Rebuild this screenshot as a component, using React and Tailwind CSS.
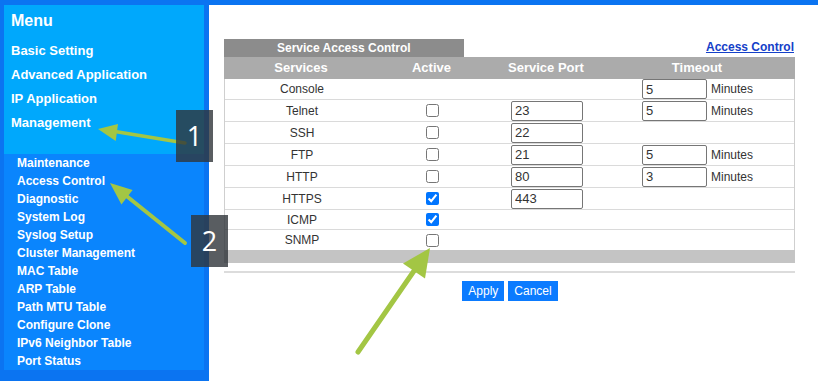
import React from 'react'

const topItems = ['Basic Setting', 'Advanced Application', 'IP Application', 'Management']
const subItems = [
  'Maintenance', 'Access Control', 'Diagnostic', 'System Log', 'Syslog Setup', 'Cluster Management',
  'MAC Table', 'ARP Table', 'Path MTU Table', 'Configure Clone', 'IPv6 Neighbor Table', 'Port Status',
]

const rows = [
  { name: 'Console', h: 'h-[21px]', box: false, port: null, timeout: '5' },
  { name: 'Telnet', h: 'h-[22px]', box: true, checked: false, port: '23', timeout: '5' },
  { name: 'SSH', h: 'h-[22px]', box: true, checked: false, port: '22', timeout: null },
  { name: 'FTP', h: 'h-[22px]', box: true, checked: false, port: '21', timeout: '5' },
  { name: 'HTTP', h: 'h-[22px]', box: true, checked: false, port: '80', timeout: '3' },
  { name: 'HTTPS', h: 'h-[22px]', box: true, checked: true, port: '443', timeout: null },
  { name: 'ICMP', h: 'h-[20px]', box: true, checked: true, port: null, timeout: null },
  { name: 'SNMP', h: 'h-[20px] border-b-0', box: true, checked: false, port: null, timeout: null },
]

function TextBox({ value, w }) {
  return (
    <input
      type="text"
      defaultValue={value}
      className={`${w} h-[20px] border border-[#767676] rounded-[2px] px-[3px] text-[13px] text-[#333] bg-white outline-none`}
    />
  )
}

function ServiceRow({ row }) {
  return (
    <div className={`grid grid-cols-[154px_107px_122px_186px] items-center border-b border-[#dadada] ${row.h}`}>
      <div className="text-center">{row.name}</div>
      <div className="flex justify-center">
        {row.box && (
          <input type="checkbox" defaultChecked={row.checked} className="w-[13px] h-[13px] accent-[#0075ff]" />
        )}
      </div>
      <div className="flex justify-center">{row.port && <TextBox value={row.port} w="w-[72px]" />}</div>
      <div className="flex items-center gap-[4px] pl-[34px]">
        {row.timeout && (
          <>
            <TextBox value={row.timeout} w="w-[65px]" />
            <span>Minutes</span>
          </>
        )}
      </div>
    </div>
  )
}

export default function App() {
  return (
    <div className="relative w-[818px] h-[381px] overflow-hidden bg-white font-['Liberation_Sans',Arial,sans-serif]">
      <div className="h-[5px] bg-[#0b74f1]" />
      <div className="flex">
        {/* Sidebar */}
        <div className="w-[209px] h-[376px] bg-[#0b74f1] pl-[4px] pr-[5px] flex flex-col">
          <div className="bg-[#00a8fc] h-[149px] pl-[7px] pt-[5px] text-white font-bold">
            <div className="text-[16px] leading-[22px]">Menu</div>
            <div className="mt-[7px] text-[13px] leading-[24px]">
              {topItems.map((t) => <div key={t}>{t}</div>)}
            </div>
          </div>
          <div className="bg-[#0a85fd] h-[216px] pl-[13px] text-white font-bold text-[12px] leading-[18px]">
            {subItems.map((t) => <div key={t}>{t}</div>)}
          </div>
        </div>

        {/* Content */}
        <div className="pl-[15px] pt-[34px] text-[12px] text-[#333]">
          <div className="w-[571px]">
            <div className="flex items-end justify-between">
              <div className="w-[240px] h-[18px] bg-[#8c8c8c] text-white font-bold leading-[18px] pl-[53px]">
                Service Access Control
              </div>
              <a href="#" className="font-bold text-[#1440c8] underline leading-[17px] mb-[1px] pr-[1px]">
                Access Control
              </a>
            </div>
            <div className="grid grid-cols-[154px_107px_122px_188px] h-[22px] items-center bg-[#ababab] text-white font-bold text-[13px]">
              <div className="text-center">Services</div>
              <div className="text-center">Active</div>
              <div className="text-center">Service Port</div>
              <div className="text-center pr-[8px]">Timeout</div>
            </div>
            <div className="border-l border-r border-[#cfcfcf]">
              {rows.map((r) => <ServiceRow key={r.name} row={r} />)}
            </div>
            <div className="h-[13px] bg-[#c4c4c4]" />
            <div className="mt-[8px] h-[2px] bg-[#dcdcdc]" />
            <div className="mt-[8px] flex justify-center gap-[4px] pl-[1px]">
              <button className="h-[20px] px-[6px] bg-[#0b7bff] text-white text-[12px]">Apply</button>
              <button className="h-[20px] px-[6px] bg-[#0b7bff] text-white text-[12px]">Cancel</button>
            </div>
          </div>
        </div>
      </div>

      {/* Annotations */}
      <svg className="absolute left-0 top-0 pointer-events-none" width="818" height="381" viewBox="0 0 818 381">
        <g stroke="#a3c644" strokeLinecap="round" fill="#a3c644">
          <line x1="185" y1="143" x2="112" y2="131" strokeWidth="3.5" />
          <polygon points="98,129 118,124 115.7,141" stroke="none" />
          <line x1="185" y1="243" x2="124" y2="194" strokeWidth="4" />
          <polygon points="110,183 132.6,190 121.4,204.5" stroke="none" />
          <line x1="358" y1="352" x2="416" y2="268" strokeWidth="5" />
          <polygon points="430,248 425,278.5 403,263.5" stroke="none" />
        </g>
      </svg>
      <div className="absolute left-[176px] top-[110px] w-[37px] h-[52px] bg-[rgba(48,52,58,0.8)] flex items-center justify-center text-white text-[27px] font-['Open_Sans',sans-serif]">
        1
      </div>
      <div className="absolute left-[191px] top-[215px] w-[37px] h-[52px] bg-[rgba(48,52,58,0.8)] flex items-center justify-center text-white text-[27px] font-['Open_Sans',sans-serif]">
        2
      </div>
    </div>
  )
}
